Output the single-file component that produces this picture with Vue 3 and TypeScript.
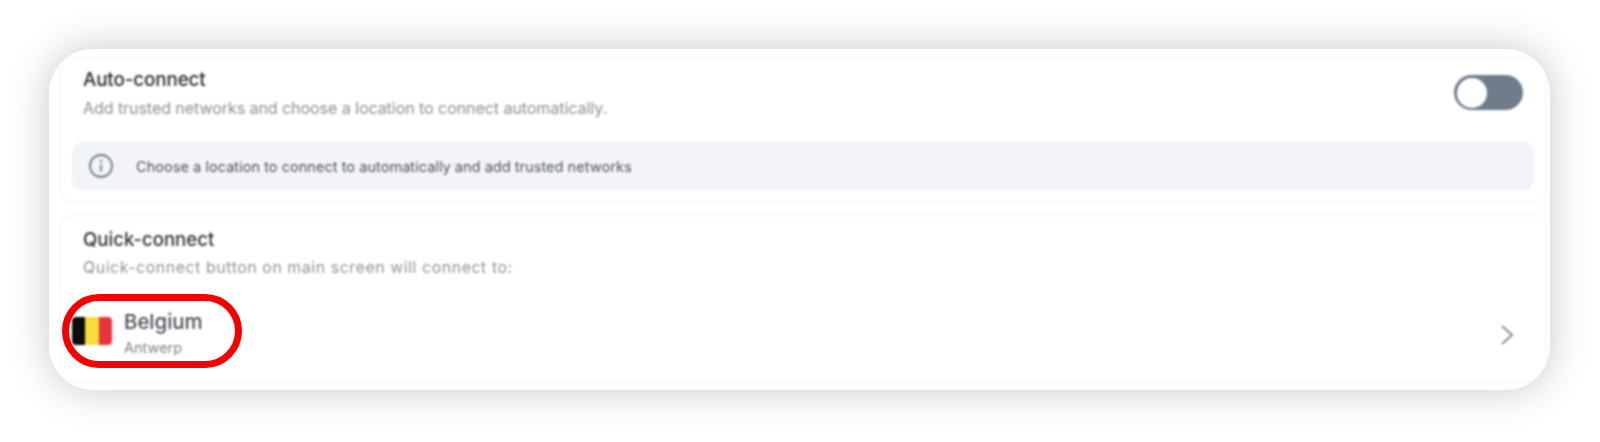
<script setup lang="ts">
const title = 'Auto-connect'
</script>

<template>
  <main class="page">
    <div class="shell">
      <div class="blurred">
        <section class="card auto">
          <div class="auto-head">
            <div>
              <h2 class="title">{{ title }}</h2>
              <p class="sub">Add trusted networks and choose a location to connect automatically.</p>
            </div>
            <div class="toggle"><span class="knob"></span></div>
          </div>
          <div class="info">
            <svg class="info-icon" width="26" height="26" viewBox="0 0 26 26" fill="none">
              <circle cx="13" cy="13" r="11" stroke="#6f7c8a" stroke-width="1.8" />
              <path d="M13 11.5v7" stroke="#6f7c8a" stroke-width="1.8" />
              <circle cx="13" cy="8" r="1.2" fill="#6f7c8a" />
            </svg>
            <span class="info-text">Choose a location to connect to automatically and add trusted networks</span>
          </div>
        </section>
        <section class="card quick">
          <h2 class="title q">Quick-connect</h2>
          <p class="sub q-sub">Quick-connect button on main screen will connect to:</p>
          <div class="loc">
            <div class="flag"><i class="black"></i><i class="yellow"></i><i class="red"></i></div>
            <div class="loc-text">
              <div class="country">Belgium</div>
              <div class="city">Antwerp</div>
            </div>
            <svg class="chev" width="16" height="24" viewBox="0 0 16 24" fill="none">
              <path d="M3 3l10 9-10 9" stroke="#8d949c" stroke-width="2.2" />
            </svg>
          </div>
        </section>
      </div>
      <div class="ring"></div>
    </div>
  </main>
</template>

<style>
html, body { margin: 0; background: #fff; }
</style>

<style scoped>
.page {
  width: 1600px;
  height: 442px;
  padding: 49px 50px 0 49px;
  box-sizing: border-box;
  overflow: hidden;
  background: #fff;
  font-family: Inter, "Liberation Sans", sans-serif;
}
.shell {
  position: relative;
  height: 341px;
  box-sizing: border-box;
  padding: 7px 3px 7px 10px;
  border-radius: 44px;
  background: #fff;
  overflow: hidden;
  box-shadow: 0 0 42px rgba(0, 0, 0, 0.22);
}
.blurred {
  display: flex;
  flex-direction: column;
  gap: 11px;
  height: 100%;
  filter: blur(0.95px);
}
.card {
  box-sizing: border-box;
  border: 2px solid #f7f8fa;
  border-radius: 14px;
  background: #fff;
}
.auto { height: 147px; padding: 9px 11px 0; }
.quick { height: 169px; padding: 11px 0 0 0; }
.auto-head {
  display: flex;
  justify-content: space-between;
  padding: 0 11px;
  height: 75px;
}
.title {
  margin: 0;
  font-size: 18.6px;
  line-height: 24px;
  font-weight: 500;
  color: #2e3237;
}
.sub {
  margin: 8px 0 0;
  font-size: 15.9px;
  line-height: 20px;
  color: #8f949a;
}
.toggle {
  width: 69px;
  height: 35px;
  margin-top: 8px;
  border-radius: 18px;
  background: #6f7c8a;
  display: flex;
  align-items: center;
  padding-left: 3px;
  box-sizing: border-box;
}
.knob {
  width: 30px;
  height: 30px;
  border-radius: 50%;
  background: #fff;
}
.info {
  display: flex;
  align-items: center;
  height: 48px;
  border-radius: 10px;
  background: #f2f4f8;
  padding-left: 16px;
  gap: 22px;
  font-size: 14.6px;
  color: #505459;
}
.info-text { padding-top: 2px; }
.q { padding-left: 22px; }
.q-sub {
  padding-left: 22px;
  margin-top: 7px;
  letter-spacing: 0.56px;
}
.loc {
  display: flex;
  align-items: center;
  height: 70px;
  margin-top: 20px;
  padding: 0 30px 0 11px;
}
.flag {
  display: flex;
  width: 40px;
  height: 28px;
  margin-top: -4px;
  border-radius: 4px;
  overflow: hidden;
}
.flag i { flex: 1; }
.black { background: #0c0c0c; }
.yellow { background: #f8dc3c; }
.red { background: #e8323f; }
.loc-text { margin-left: 12px; }
.country { font-size: 20.4px; line-height: 24px; font-weight: 500; color: #4a4f56; }
.city { font-size: 14.5px; line-height: 18px; margin-top: 5px; color: #7d8288; }
.chev { margin-left: auto; margin-top: 4px; }
.ring {
  position: absolute;
  left: 13px;
  top: 245px;
  width: 180px;
  height: 74px;
  box-sizing: border-box;
  border: 7px solid #f60000;
  border-radius: 37px;
  pointer-events: none;
  filter: blur(0.5px);
}
</style>
